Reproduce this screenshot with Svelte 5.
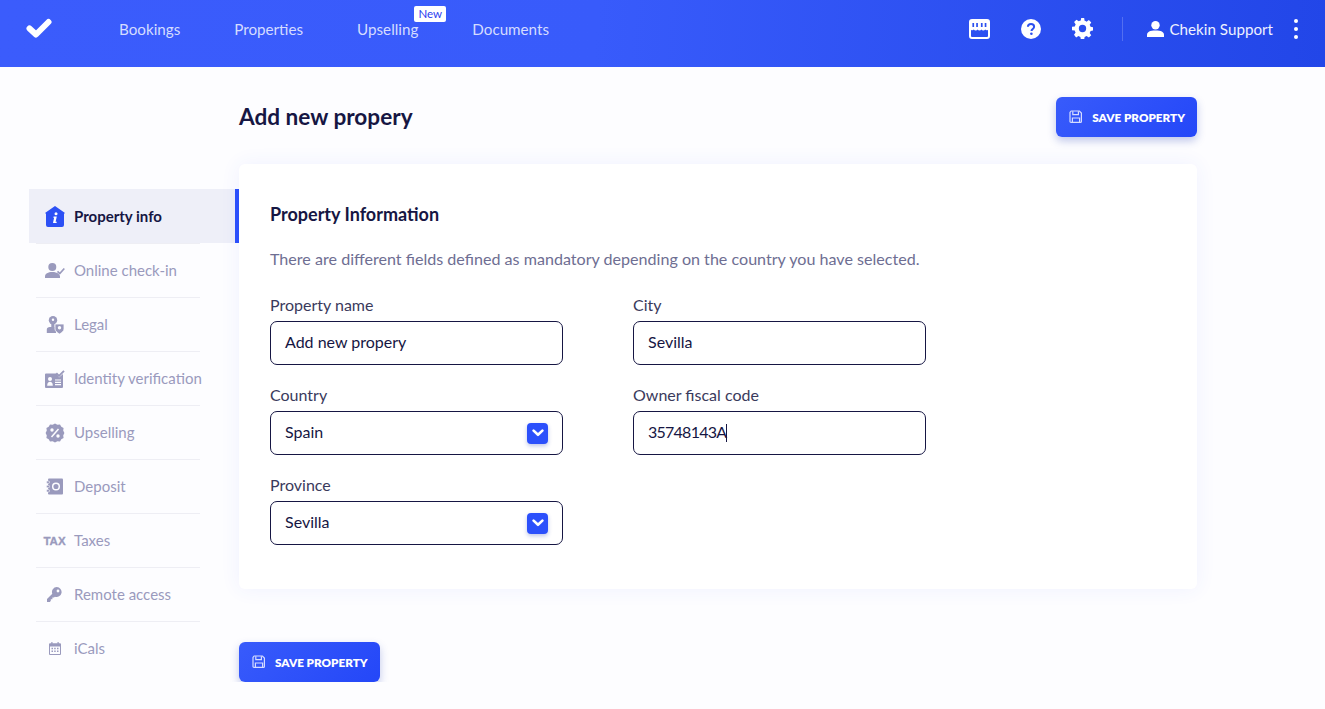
<script>
	const navLinks = [
		{ label: 'Bookings' },
		{ label: 'Properties' },
		{ label: 'Upselling', badge: 'New' },
		{ label: 'Documents' }
	];
	const sideItems = ['Online check-in', 'Legal', 'Identity verification', 'Upselling', 'Deposit', 'Taxes', 'Remote access', 'iCals'];
</script>

{#snippet saveIcon()}
	<svg class="save-icon" width="14" height="14" viewBox="0 0 14 14" fill="none" stroke="currentColor" stroke-width="1.2">
		<path d="M1.6 1.6a1 1 0 0 1 .8-.6h8l2 2v8.4a1 1 0 0 1-1 1H2a1 1 0 0 1-1-1V2.4z" />
		<path d="M3.8 1.2v3.4h5.6V1.2M3.4 12.8V8h7.2v4.8" />
	</svg>
{/snippet}

{#snippet chevronBox()}
	<span class="chevron">
		<svg width="12" height="8" viewBox="0 0 12 8" fill="none" stroke="#fff" stroke-width="2.6" stroke-linecap="round" stroke-linejoin="round">
			<path d="M1.6 1.6 6 5.8l4.4-4.2" />
		</svg>
	</span>
{/snippet}

{#snippet sideIcon(name)}
	{#if name === 'Online check-in'}
		<svg width="20" height="15" viewBox="0 0 20 15" fill="#9a9abd">
			<circle cx="7.300" cy="4" r="4" />
			<path d="M0 15v-1.500C0 10.500 3 9 7.300 9c2.600 0 4.700.5 6 1.600L15 12.800V15z" />
			<path d="M12.500 8.300l2.300 2.200L19.300 5.500" fill="none" stroke="#9a9abd" stroke-width="1.700" />
		</svg>
	{:else if name === 'Legal'}
		<svg width="18" height="18" viewBox="0 0 18 18" fill="#9a9abd">
			<circle cx="7" cy="4.200" r="4.200" />
			<circle cx="7" cy="3.800" r="1.200" fill="#fdfdff" />
			<path d="M5.300 8h3.400v3H10v6H.8v-3.500c0-1.500 1.200-2.500 3-2.500h1.500z" />
			<path d="M9 8h9v5c0 2-2.300 3.900-4.500 5C11.300 16.900 9 15 9 13z" stroke="#fdfdff" stroke-width=".8" />
			<circle cx="13.500" cy="11.800" r="1.700" fill="#fdfdff" />
		</svg>
	{:else if name === 'Identity verification'}
		<svg width="20" height="18" viewBox="0 0 20 18" fill="#9a9abd">
			<path d="M1 3.500h10.500l2.500 4 4-3.500V17a1 1 0 0 1-1 1H1a1 1 0 0 1-1-1V4.500a1 1 0 0 1 1-1z" />
			<path d="M11.300 3.300l2.700 2.600L19 .8" fill="none" stroke="#9a9abd" stroke-width="1.900" />
			<circle cx="5" cy="9" r="2" fill="#fdfdff" />
			<path d="M2.200 15.800c0-3 1.200-4 2.800-4s2.800 1 2.800 4z" fill="#fdfdff" />
			<path d="M10 10h6M10 12.300h6M10 14.600h6" stroke="#fdfdff" stroke-width="1.200" />
		</svg>
	{:else if name === 'Upselling'}
		<svg width="20" height="20" viewBox="0 0 20 20">
			<path fill="#9a9abd" d="M10 .6l2.400 1.200 2.600-.4 1.300 2.300 2.300 1.300-.4 2.600L19.400 10l-1.200 2.400.4 2.600-2.300 1.300-1.300 2.300-2.600-.4L10 19.400l-2.400-1.200-2.600.4-1.300-2.300-2.300-1.300.4-2.600L.6 10l1.200-2.400-.4-2.600 2.300-1.300L5 1.400l2.600.4z" />
			<circle cx="7" cy="7" r="1.700" fill="#fdfdff" />
			<circle cx="13" cy="13" r="1.700" fill="#fdfdff" />
			<path d="M13.500 6 6.500 14" stroke="#fdfdff" stroke-width="1.500" />
		</svg>
	{:else if name === 'Deposit'}
		<svg width="17" height="17" viewBox="0 0 17 17">
			<rect x="2" y="0.500" width="15" height="16" rx="1" fill="#9a9abd" />
			<rect x="0.500" y="3" width="3" height="2.400" rx="1" fill="#9a9abd" stroke="#fdfdff" stroke-width=".6" />
			<rect x="0.500" y="7.300" width="3" height="2.400" rx="1" fill="#9a9abd" stroke="#fdfdff" stroke-width=".6" />
			<rect x="0.500" y="11.600" width="3" height="2.400" rx="1" fill="#9a9abd" stroke="#fdfdff" stroke-width=".6" />
			<circle cx="10" cy="8.500" r="3.300" fill="none" stroke="#fdfdff" stroke-width="1.500" />
		</svg>
	{:else if name === 'Taxes'}
		<span class="tax">TAX</span>
	{:else if name === 'Remote access'}
		<svg width="15" height="15" viewBox="0 0 15 15" fill="#9a9abd">
			<path fill-rule="evenodd" d="M9.800 0a5 5 0 1 1-1.900 9.700L7 10.600H5.400v1.600H3.800v1.600L2.900 15H0v-3l5.300-5.200A5 5 0 0 1 9.800 0zm1.200 2.600a1.400 1.400 0 1 0 0 2.800 1.400 1.400 0 0 0 0-2.800z" />
		</svg>
	{:else if name === 'iCals'}
		<svg width="12" height="13" viewBox="0 0 12 13" fill="#9a9abd">
			<path fill-rule="evenodd" d="M2.300 0h1.200v1.300h5V0h1.200v1.300h1.300a1 1 0 0 1 1 1V12a1 1 0 0 1-1 1H1a1 1 0 0 1-1-1V2.300a1 1 0 0 1 1-1h1.300zM1 4.500V12h10V4.500z" />
			<path d="M2.500 5.800h1.500v1.500H2.500zM5.200 5.800h1.500v1.500H5.200zM8 5.800h1.500v1.500H8zM2.500 8.500h1.500V10H2.500zM5.200 8.500h1.500V10H5.200zM8 8.500h1.500V10H8z" />
		</svg>
	{/if}
{/snippet}

<header class="topbar">
	<div class="logo">
		<svg width="26" height="21" viewBox="0 0 26 21">
			<path d="M3.500 10.500 10 16.500 22.500 4" fill="none" stroke="#fff" stroke-width="6" stroke-linecap="round" stroke-linejoin="round" />
		</svg>
	</div>
	<nav class="nav">
		{#each navLinks as link}
			<a class="nav-link" href="#top">
				{link.label}
				{#if link.badge}
					<span class="badge">{link.badge}</span>
				{/if}
			</a>
		{/each}
	</nav>
	<div class="actions">
		<svg width="21" height="20" viewBox="0 0 21 20">
			<rect x="1" y="1" width="19" height="18" rx="2" fill="none" stroke="#fff" stroke-width="2" />
			<path fill="#fff" d="M1 1h19v8.500a2.200 2.200 0 0 1-3.800 1 2.200 2.200 0 0 1-3.800 0 2.200 2.200 0 0 1-3.800 0 2.200 2.200 0 0 1-3.800 0A2.200 2.200 0 0 1 1 9.500z" />
			<path fill="#2c50ef" d="M3.400 4h1.700v4H3.400zM7.200 4h1.700v4H7.200zM11.900 4h1.700v4h-1.700zM15.700 4h1.700v4h-1.700z" />
		</svg>
		<svg class="help" width="20" height="20" viewBox="0 0 20 20">
			<circle cx="10" cy="10" r="10" fill="#fff" />
			<path d="M6.900 7.700C7 5.800 8.300 5 10 5s3.100 1 3.100 2.700c0 2.200-2.600 2.200-2.600 4.200" fill="none" stroke="#2c50ef" stroke-width="2" />
			<circle cx="10.400" cy="14.800" r="1.300" fill="#2c50ef" />
		</svg>
		<svg class="gear" width="21" height="21" viewBox="0 0 24 24" fill="#fff">
			<path fill-rule="evenodd" d="M13.900 0l.5 3.200c.8.200 1.500.5 2.200 1L19.300 2.400l2.700 2.700-1.800 2.700c.4.700.8 1.400 1 2.200l3.200.5v3.800l-3.200.5c-.2.800-.5 1.500-1 2.200l1.800 2.700-2.700 2.700-2.700-1.800c-.7.400-1.400.8-2.200 1l-.5 3.200h-3.800l-.5-3.200c-.8-.2-1.500-.5-2.200-1l-2.700 1.800L2.300 19.200l1.800-2.700c-.4-.7-.8-1.400-1-2.200L0 13.900v-3.800l3.200-.5c.2-.8.500-1.500 1-2.200L2.400 4.700l2.700-2.700 2.700 1.800c.7-.4 1.400-.8 2.200-1l.5-2.800zM12 7.800a4.200 4.200 0 1 0 0 8.400 4.200 4.200 0 0 0 0-8.400z" />
		</svg>
		<span class="divider"></span>
		<div class="user">
			<svg width="17" height="16" viewBox="0 0 17 16" fill="#fff">
				<circle cx="8.500" cy="4.200" r="4.200" />
				<path d="M0 16v-2.200C0 11 3 9.500 8.500 9.500S17 11 17 13.800V16z" />
			</svg>
			<span>Chekin Support</span>
		</div>
		<span class="dots"><i></i><i></i><i></i></span>
	</div>
</header>

<div class="page">
	<aside class="sidebar">
		<div class="side-item active">
			<span class="side-icon">
				<svg width="20" height="21" viewBox="0 0 20 21">
					<path fill="#2c50f5" d="M10 0 20 7l-1 .8V19a2 2 0 0 1-2 2H3a2 2 0 0 1-2-2V7.800L0 7z" />
					<circle cx="11" cy="7.800" r="1.500" fill="#fff" />
					<path d="M8.600 10.500h3.200l-1.200 5.200h1.200l-.3 1.300H8l1.100-5.200H8.300z" fill="#fff" />
				</svg>
			</span>
			<span class="side-label">Property info</span>
		</div>
		{#each sideItems as item}
			<div class="side-item">
				<span class="side-icon">{@render sideIcon(item)}</span>
				<span class="side-label">{item}</span>
			</div>
		{/each}
	</aside>

	<main class="content">
		<div class="title-row">
			<h1>Add new propery</h1>
			<button class="save">{@render saveIcon()} SAVE PROPERTY</button>
		</div>

		<section class="card">
			<h2>Property Information</h2>
			<p class="hint">There are different fields defined as mandatory depending on the country you have selected.</p>
			<div class="fields">
				<div class="field">
					<span class="label">Property name</span>
					<div class="box"><span class="value">Add new propery</span></div>
				</div>
				<div class="field">
					<span class="label">City</span>
					<div class="box"><span class="value">Sevilla</span></div>
				</div>
				<div class="field">
					<span class="label">Country</span>
					<div class="box"><span class="value">Spain</span> {@render chevronBox()}</div>
				</div>
				<div class="field">
					<span class="label">Owner fiscal code</span>
					<div class="box"><span class="value code">35748143A</span><span class="caret"></span></div>
				</div>
				<div class="field">
					<span class="label">Province</span>
					<div class="box"><span class="value">Sevilla</span> {@render chevronBox()}</div>
				</div>
			</div>
		</section>

		<button class="save bottom">{@render saveIcon()} SAVE PROPERTY</button>
	</main>
</div>

<style>
	:global(body) {
		background: #fdfdff;
		font-family: 'Lato', 'Open Sans', sans-serif;
		color: #161643;
	}
	.topbar {
		height: 67px;
		display: flex;
		align-items: center;
		background: linear-gradient(95deg, #3b5cfc 0%, #385bfb 45%, #2246e8 100%);
		padding-left: 26px;
		padding-right: 27px;
		padding-bottom: 10px;
		box-sizing: border-box;
	}
	.logo {
		display: flex;
		width: 93px;
	}
	.nav {
		display: flex;
		gap: 54px;
	}
	.nav-link {
		position: relative;
		font-size: 15.2px;
		color: #d5dcff;
		text-decoration: none;
	}
	.badge {
		position: absolute;
		top: -14px;
		right: -28px;
		width: 32px;
		box-sizing: border-box;
		text-align: center;
		background: #fff;
		color: #2c40f0;
		font-size: 11.5px;
		line-height: 16px;
		border-radius: 2px;
	}
	.actions {
		margin-left: auto;
		display: flex;
		align-items: center;
	}
	.help {
		margin-left: 31px;
	}
	.gear {
		margin-left: 31px;
	}
	.divider {
		width: 1px;
		height: 24px;
		background: rgba(255, 255, 255, 0.2);
		margin-left: 29px;
	}
	.user {
		display: flex;
		align-items: center;
		gap: 5px;
		margin-left: 24px;
		color: #eef1ff;
		font-size: 15.2px;
	}
	.dots {
		display: flex;
		flex-direction: column;
		gap: 4px;
		margin-left: 21px;
	}
	.dots i {
		width: 4px;
		height: 4px;
		border-radius: 50%;
		background: #fff;
	}
	.page {
		display: flex;
		padding-left: 29px;
	}
	.sidebar {
		width: 210px;
		padding-top: 122px;
		flex: none;
	}
	.side-item {
		height: 54px;
		width: 164px;
		margin-left: 7px;
		box-sizing: border-box;
		display: flex;
		align-items: center;
		border-top: 1px solid #eeeef4;
		color: #9a9abd;
		font-size: 15px;
		white-space: nowrap;
	}
	.side-label {
		margin-bottom: 2px;
	}
	.side-item.active {
		width: 210px;
		margin-left: 0;
		padding-left: 7px;
		padding-top: 1px;
		background: #eeeff8;
		border-right: 4px solid #2c50fb;
		border-top: none;
		color: #161643;
		font-weight: 700;
	}
	.side-icon {
		width: 38px;
		flex: none;
		display: flex;
		justify-content: center;
		padding-right: 1px;
		box-sizing: border-box;
	}
	.tax {
		font-family: 'Liberation Sans', sans-serif;
		font-weight: 700;
		font-size: 11.5px;
		color: #9a9abd;
		-webkit-text-stroke: 0.3px #9a9abd;
	}
	.content {
		width: 958px;
		flex: none;
	}
	.title-row {
		display: flex;
		justify-content: space-between;
		align-items: center;
		padding-top: 30px;
	}
	h1 {
		font-size: 22.6px;
		font-weight: 700;
		margin: 0 0 2px;
	}
	.save {
		display: flex;
		align-items: center;
		gap: 9px;
		height: 40px;
		padding: 0 12px 0 13px;
		border: none;
		border-radius: 6px;
		background: linear-gradient(135deg, #385bfb, #2447f8);
		box-shadow: 0 4px 8px rgba(36, 60, 180, 0.28);
		color: #fff;
		font-family: inherit;
		font-weight: 800;
		font-size: 11.7px;
	}
	.save-icon {
		color: #d5dcff;
	}
	.bottom {
		margin-top: 53px;
	}
	.card {
		margin-top: 27px;
		height: 425px;
		box-sizing: border-box;
		padding: 40px 31px 0;
		background: #fff;
		border-radius: 6px;
		box-shadow: 0 0 20px rgba(60, 80, 255, 0.07);
	}
	h2 {
		font-size: 18px;
		font-weight: 700;
		margin: 0;
		line-height: 21px;
	}
	.hint {
		margin: 24px 0 0;
		font-size: 16.1px;
		line-height: 20px;
		color: #6e6e92;
	}
	.fields {
		display: grid;
		grid-template-columns: 293px 293px;
		column-gap: 70px;
		row-gap: 21px;
		margin-top: 27px;
	}
	.label {
		display: block;
		font-size: 16px;
		line-height: 18px;
		color: #3a3a5c;
		margin-bottom: 7px;
	}
	.box {
		height: 44px;
		box-sizing: border-box;
		border: 1px solid #161643;
		border-radius: 7px;
		padding: 0 14px;
		display: flex;
		align-items: center;
		font-size: 16px;
		color: #161643;
	}
	.value {
		margin-bottom: 3px;
	}
	.code {
		letter-spacing: -0.75px;
	}
	.caret {
		width: 1px;
		height: 18px;
		background: #161643;
	}
	.chevron {
		margin-left: auto;
		width: 21px;
		height: 21px;
		border-radius: 4px;
		background: #2c50fb;
		box-shadow: 0 2px 4px rgba(36, 60, 180, 0.3);
		display: flex;
		align-items: center;
		justify-content: center;
	}
</style>
